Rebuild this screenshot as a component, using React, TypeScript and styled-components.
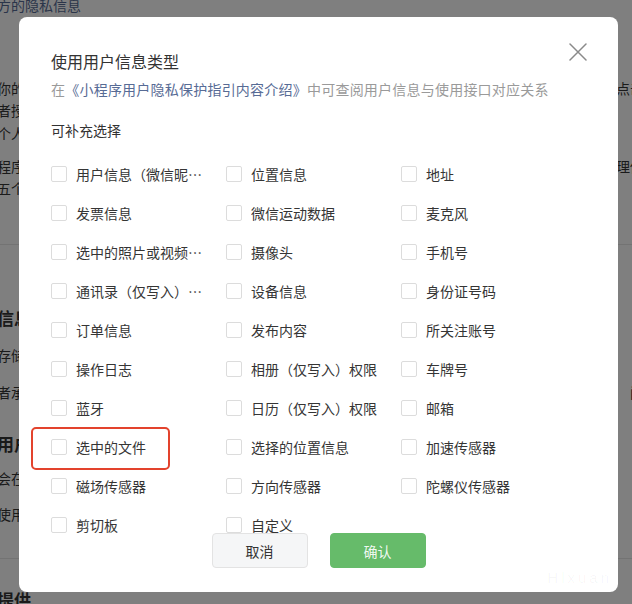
import React from 'react';
import styled, { createGlobalStyle } from 'styled-components';

interface Option {
  name: string;
  marked?: boolean;
}

const Options: Option[] = [
  { name: '用户信息（微信昵称、头像）' },
  { name: '位置信息' },
  { name: '地址' },
  { name: '发票信息' },
  { name: '微信运动数据' },
  { name: '麦克风' },
  { name: '选中的照片或视频信息' },
  { name: '摄像头' },
  { name: '手机号' },
  { name: '通讯录（仅写入）权限' },
  { name: '设备信息' },
  { name: '身份证号码' },
  { name: '订单信息' },
  { name: '发布内容' },
  { name: '所关注账号' },
  { name: '操作日志' },
  { name: '相册（仅写入）权限' },
  { name: '车牌号' },
  { name: '蓝牙' },
  { name: '日历（仅写入）权限' },
  { name: '邮箱' },
  { name: '选中的文件', marked: true },
  { name: '选择的位置信息' },
  { name: '加速传感器' },
  { name: '磁场传感器' },
  { name: '方向传感器' },
  { name: '陀螺仪传感器' },
  { name: '剪切板' },
  { name: '自定义' },
];

interface BgLineType {
  left: string;
  right?: string;
  space: number;
  bold?: boolean;
  link?: boolean;
  rule?: boolean;
}

// page that sits under the mask
const BgLines: BgLineType[] = [
  { left: '方的隐私信息', space: -6, link: true },
  { left: '你的小程序', right: '点击', space: 61 },
  { left: '者授权', space: 0 },
  { left: '个人信息', space: 1 },
  { left: '程序', right: '理你', space: 11 },
  { left: '五个', space: 0 },
  { left: '', space: 45, rule: true },
  { left: '信息', space: 61, bold: true },
  { left: '存储', space: 14 },
  { left: '者承', right: '间', space: 15 },
  { left: '用户', space: 29, bold: true },
  { left: '会在', space: 11 },
  { left: '使用', space: 14 },
  { left: '', space: 33, rule: true },
  { left: '提供', space: 29, bold: true },
];

const GlobalStyle = createGlobalStyle`
  html, body {
    margin: 0;
    padding: 0;
  }
  body {
    font-family: 'Noto Sans CJK SC', 'Noto Sans', sans-serif;
    -webkit-font-smoothing: antialiased;
  }
  * {
    box-sizing: border-box;
  }
`;

const CloseIcon: React.FC = () => (
  <svg width="18" height="18" viewBox="0 0 18 18" fill="none">
    <path d="M1 1L17 17M17 1L1 17" stroke="#8a8a8a" strokeWidth="1.5" strokeLinecap="round" />
  </svg>
);

const App: React.FC = () => (
  <>
    <GlobalStyle />
    <Page>
      {BgLines.map((line, i) =>
        line.rule ? (
          <Rule key={i} $space={line.space} />
        ) : (
          <BgLine key={i} $space={line.space} $bold={line.bold} $link={line.link}>
            <span>{line.left}</span>
            {line.right && <BgRight>{line.right}</BgRight>}
          </BgLine>
        ),
      )}
      <Mask>
        <Dialog>
          <Header>
            <Title>使用用户信息类型</Title>
            <Hint>
              在<Link>《小程序用户隐私保护指引内容介绍》</Link>中可查阅用户信息与使用接口对应关系
            </Hint>
            <Close aria-label="关闭">
              <CloseIcon />
            </Close>
          </Header>
          <Body>
            <Caption>可补充选择</Caption>
            <Grid>
              {Options.map(option => (
                <Item key={option.name} $marked={option.marked}>
                  <Box />
                  <Label>{option.name}</Label>
                </Item>
              ))}
            </Grid>
          </Body>
          <Footer>
            <Button>取消</Button>
            <Button $primary>确认</Button>
          </Footer>
          <Watermark>Hlxuan</Watermark>
        </Dialog>
      </Mask>
    </Page>
  </>
);

const Page = styled.div`
  position: relative;
  width: 632px;
  height: 604px;
  overflow: hidden;
  background: #fff;
  color: #333;
`;

const BgLine = styled.div<{ $space: number; $bold?: boolean; $link?: boolean }>`
  display: flex;
  justify-content: space-between;
  margin: ${p => p.$space}px -12px 0 -3px;
  font-size: ${p => (p.$bold ? 17 : 14)}px;
  font-weight: ${p => (p.$bold ? 700 : 400)};
  line-height: ${p => (p.$bold ? 24 : 22)}px;
  color: ${p => (p.$link ? '#576b95' : '#353535')};
  white-space: nowrap;
`;

const BgRight = styled.span`
  text-align: right;
`;

const Rule = styled.div<{ $space: number }>`
  margin-top: ${p => p.$space}px;
  height: 1px;
  background: #e6e6e6;
`;

const Mask = styled.div`
  position: absolute;
  inset: 0;
  display: flex;
  align-items: flex-start;
  padding: 17px 0 0 19px;
  background: rgba(0, 0, 0, 0.5);
`;

const Dialog = styled.div`
  position: relative;
  display: flex;
  flex-direction: column;
  width: 599px;
  height: 575px;
  background: #fff;
  border-radius: 8px;
`;

const Header = styled.div`
  padding: 32px 32px 0;
`;

const Title = styled.h2`
  margin: 0;
  font-size: 16px;
  font-weight: 400;
  line-height: 24px;
  color: #333;
`;

const Hint = styled.p`
  margin: 6px 0 0;
  font-size: 14px;
  line-height: 20px;
  letter-spacing: 0.22px;
  color: #9a9a9a;
  white-space: nowrap;
`;

const Link = styled.a`
  color: #576b95;
  text-decoration: none;
`;

const Close = styled.button`
  position: absolute;
  top: 26px;
  right: 31px;
  display: flex;
  padding: 0;
  border: 0;
  background: none;
`;

const Body = styled.div`
  flex: 1;
  min-height: 0;
  overflow: hidden;
  padding: 21px 32px 0;
`;

const Caption = styled.p`
  margin: 0 0 14px;
  font-size: 14px;
  line-height: 20px;
  color: #333;
`;

const Grid = styled.div`
  display: grid;
  grid-template-columns: repeat(3, 175px);
  grid-auto-rows: 39px;
`;

const Item = styled.label<{ $marked?: boolean }>`
  position: relative;
  display: flex;
  align-items: center;
  gap: 9px;

  &::before {
    content: '';
    display: ${p => (p.$marked ? 'block' : 'none')};
    position: absolute;
    left: -20px;
    top: 0;
    width: 135px;
    height: 39px;
    border: 2px solid #e3432d;
    border-radius: 5px;
  }
`;

const Box = styled.span`
  flex: none;
  width: 16px;
  height: 16px;
  border: 1px solid #dcdcdc;
  border-radius: 2px;
  background: #fff;
`;

const Label = styled.span`
  max-width: 130px;
  overflow: hidden;
  white-space: nowrap;
  text-overflow: ellipsis;
  font-size: 14px;
  line-height: 20px;
  color: #353535;
`;

const Footer = styled.div`
  display: flex;
  justify-content: center;
  gap: 22px;
  padding: 0 0 24px;
`;

const Button = styled.button<{ $primary?: boolean }>`
  width: 96px;
  height: 35px;
  padding: 0;
  border: 1px solid ${p => (p.$primary ? '#66bb6a' : '#e3e3e3')};
  border-radius: 4px;
  background: ${p => (p.$primary ? '#66bb6a' : '#f5f6f7')};
  color: ${p => (p.$primary ? 'rgba(255, 255, 255, 0.92)' : '#333')};
  font-family: inherit;
  font-size: 14px;
`;

const Watermark = styled.span`
  position: absolute;
  right: 6px;
  bottom: 6px;
  font-family: 'Liberation Sans', sans-serif;
  font-size: 15px;
  letter-spacing: 3px;
  color: rgba(0, 0, 0, 0.035);
`;

export default App;
